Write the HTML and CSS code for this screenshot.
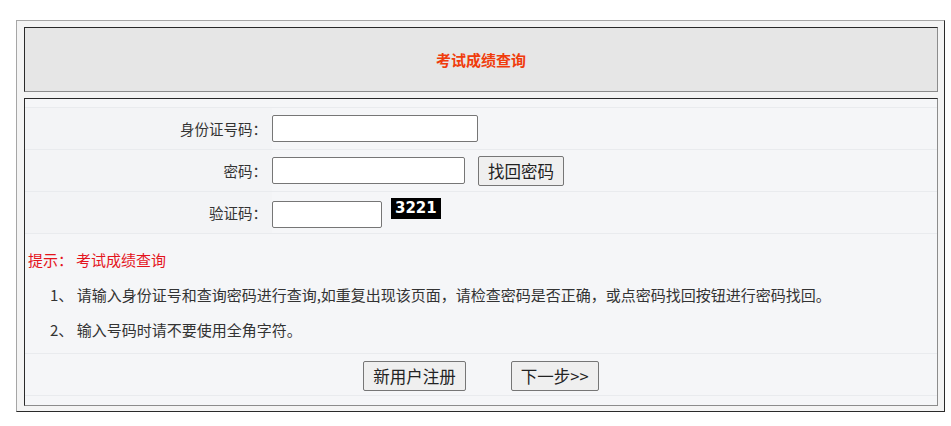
FILE: index.html
```html
<!DOCTYPE html>
<html>
<head>
	<title>考试成绩查询</title>
	<meta charset="UTF-8">
	<link rel="stylesheet" href="styles.css">
</head>
<body>

    <div class="frame">
        <div class="head">
            <span class="title">考试成绩查询</span>
        </div>

        <div class="main">
            <form class="form">
                <div class="row row-first">
                    <label class="lbl">身份证号码：</label>
                    <div class="fld">
                        <input class="ipt w-id" type="text" />
                    </div>
                </div>

                <div class="row">
                    <label class="lbl">密码：</label>
                    <div class="fld">
                        <input class="ipt w-pwd" type="password" />
                        <button class="btn btn-find" type="button">找回密码</button>
                    </div>
                </div>

                <div class="row">
                    <label class="lbl">验证码：</label>
                    <div class="fld fld-top">
                        <input class="ipt w-code" type="text" />
                        <span class="captcha">3221</span>
                    </div>
                </div>

                <div class="tips">
                    <p class="tip-title">提示：<span class="tip-gap"></span>考试成绩查询</p>
                    <p class="tip-line">1、 请输入身份证号和查询密码进行查询,如重复出现该页面，请检查密码是否正确，或点密码找回按钮进行密码找回。</p>
                    <p class="tip-line">2、 输入号码时请不要使用全角字符。</p>
                </div>

                <div class="actions">
                    <button class="btn" type="button">新用户注册</button>
                    <button class="btn" type="button">下一步&gt;&gt;</button>
                </div>
            </form>
        </div>
    </div>

</body>
</html>
```

FILE: styles.css
```css
		*{
			font-family: "Noto Sans CJK SC", sans-serif;
			box-sizing: border-box;
		}
		body{
			margin: 0;
			background-color: white;
			color: #333;
		}
		.frame{
			display: flex;
			flex-direction: column;
			gap: 6px;
			width: 929px;
			margin: 20px 0 0 16px;
			padding: 6px 6px 5px 7px;
			border: 1px solid;
			border-color: #a6a6a6 #2a2a2a #2a2a2a #a6a6a6;
			background-color: #f4f4f4;
		}
		.head{
			display: flex;
			justify-content: center;
			align-items: center;
			height: 65px;
			border: 1px solid;
			border-color: #2a2a2a #8c8c8c #8c8c8c #2a2a2a;
			background-color: #e6e6e6;
		}
        .title {
            color: #f03c0c;
            font-size: 15px;
            font-weight: bold;
        }
		.main{
			height: 308px;
			padding-top: 8px;
			border: 1px solid;
			border-color: #2a2a2a #8c8c8c #8c8c8c #2a2a2a;
			background-color: #f5f6f8;
		}
		.form{
			margin: 0;
		}
		.row{
			display: grid;
			grid-template-columns: 247px 1fr;
			height: 42px;
			border-top: 1px solid #e9ebee;
		}
		.lbl{
			display: flex;
			justify-content: flex-end;
			align-items: center;
			padding-right: 5px;
			font-size: 14.5px;
			color: #333;
			background-color: #f3f4f6;
		}
		.fld{
			display: flex;
			align-items: center;
			gap: 13px;
		}
		.fld-top{
			align-items: flex-start;
			padding-top: 9px;
			gap: 9px;
		}
        .ipt {
            height: 27px;
            margin: 0;
            border: 1px solid #767676;
            border-radius: 2px;
            background-color: white;
        }
        .w-id { width: 206px; }
        .w-pwd { width: 193px; }
        .w-code { width: 110px; }
        .captcha {
            margin-top: -3px;
            padding: 0 4px;
            height: 21px;
            line-height: 21px;
            background-color: black;
            color: white;
            font-family: "DejaVu Sans", sans-serif;
            font-size: 15px;
            font-weight: bold;
        }
        .btn {
            height: 30px;
            margin: 0;
            padding: 0 9px;
            font-size: 16.5px;
            color: #222;
            border: 1px solid #767676;
            border-radius: 2px;
            background-color: #efefef;
        }
		.tips{
			padding: 8px 0 6px;
			border-top: 1px solid #e9ebee;
		}
		.tips p{
			margin: 0;
			height: 35px;
			line-height: 35px;
			font-size: 15px;
			white-space: nowrap;
		}
		.tip-title{
			padding-left: 3px;
			color: #e4141c;
		}
		.tip-gap{
			display: inline-block;
			width: 3px;
		}
		.tip-line{
			padding-left: 25px;
			color: #333;
		}
		.actions{
			display: flex;
			justify-content: center;
			align-items: center;
			gap: 45px;
			height: 43px;
			padding-top: 2px;
			border-top: 1px solid #e9ebee;
			border-bottom: 1px solid #e9ebee;
		}
```
